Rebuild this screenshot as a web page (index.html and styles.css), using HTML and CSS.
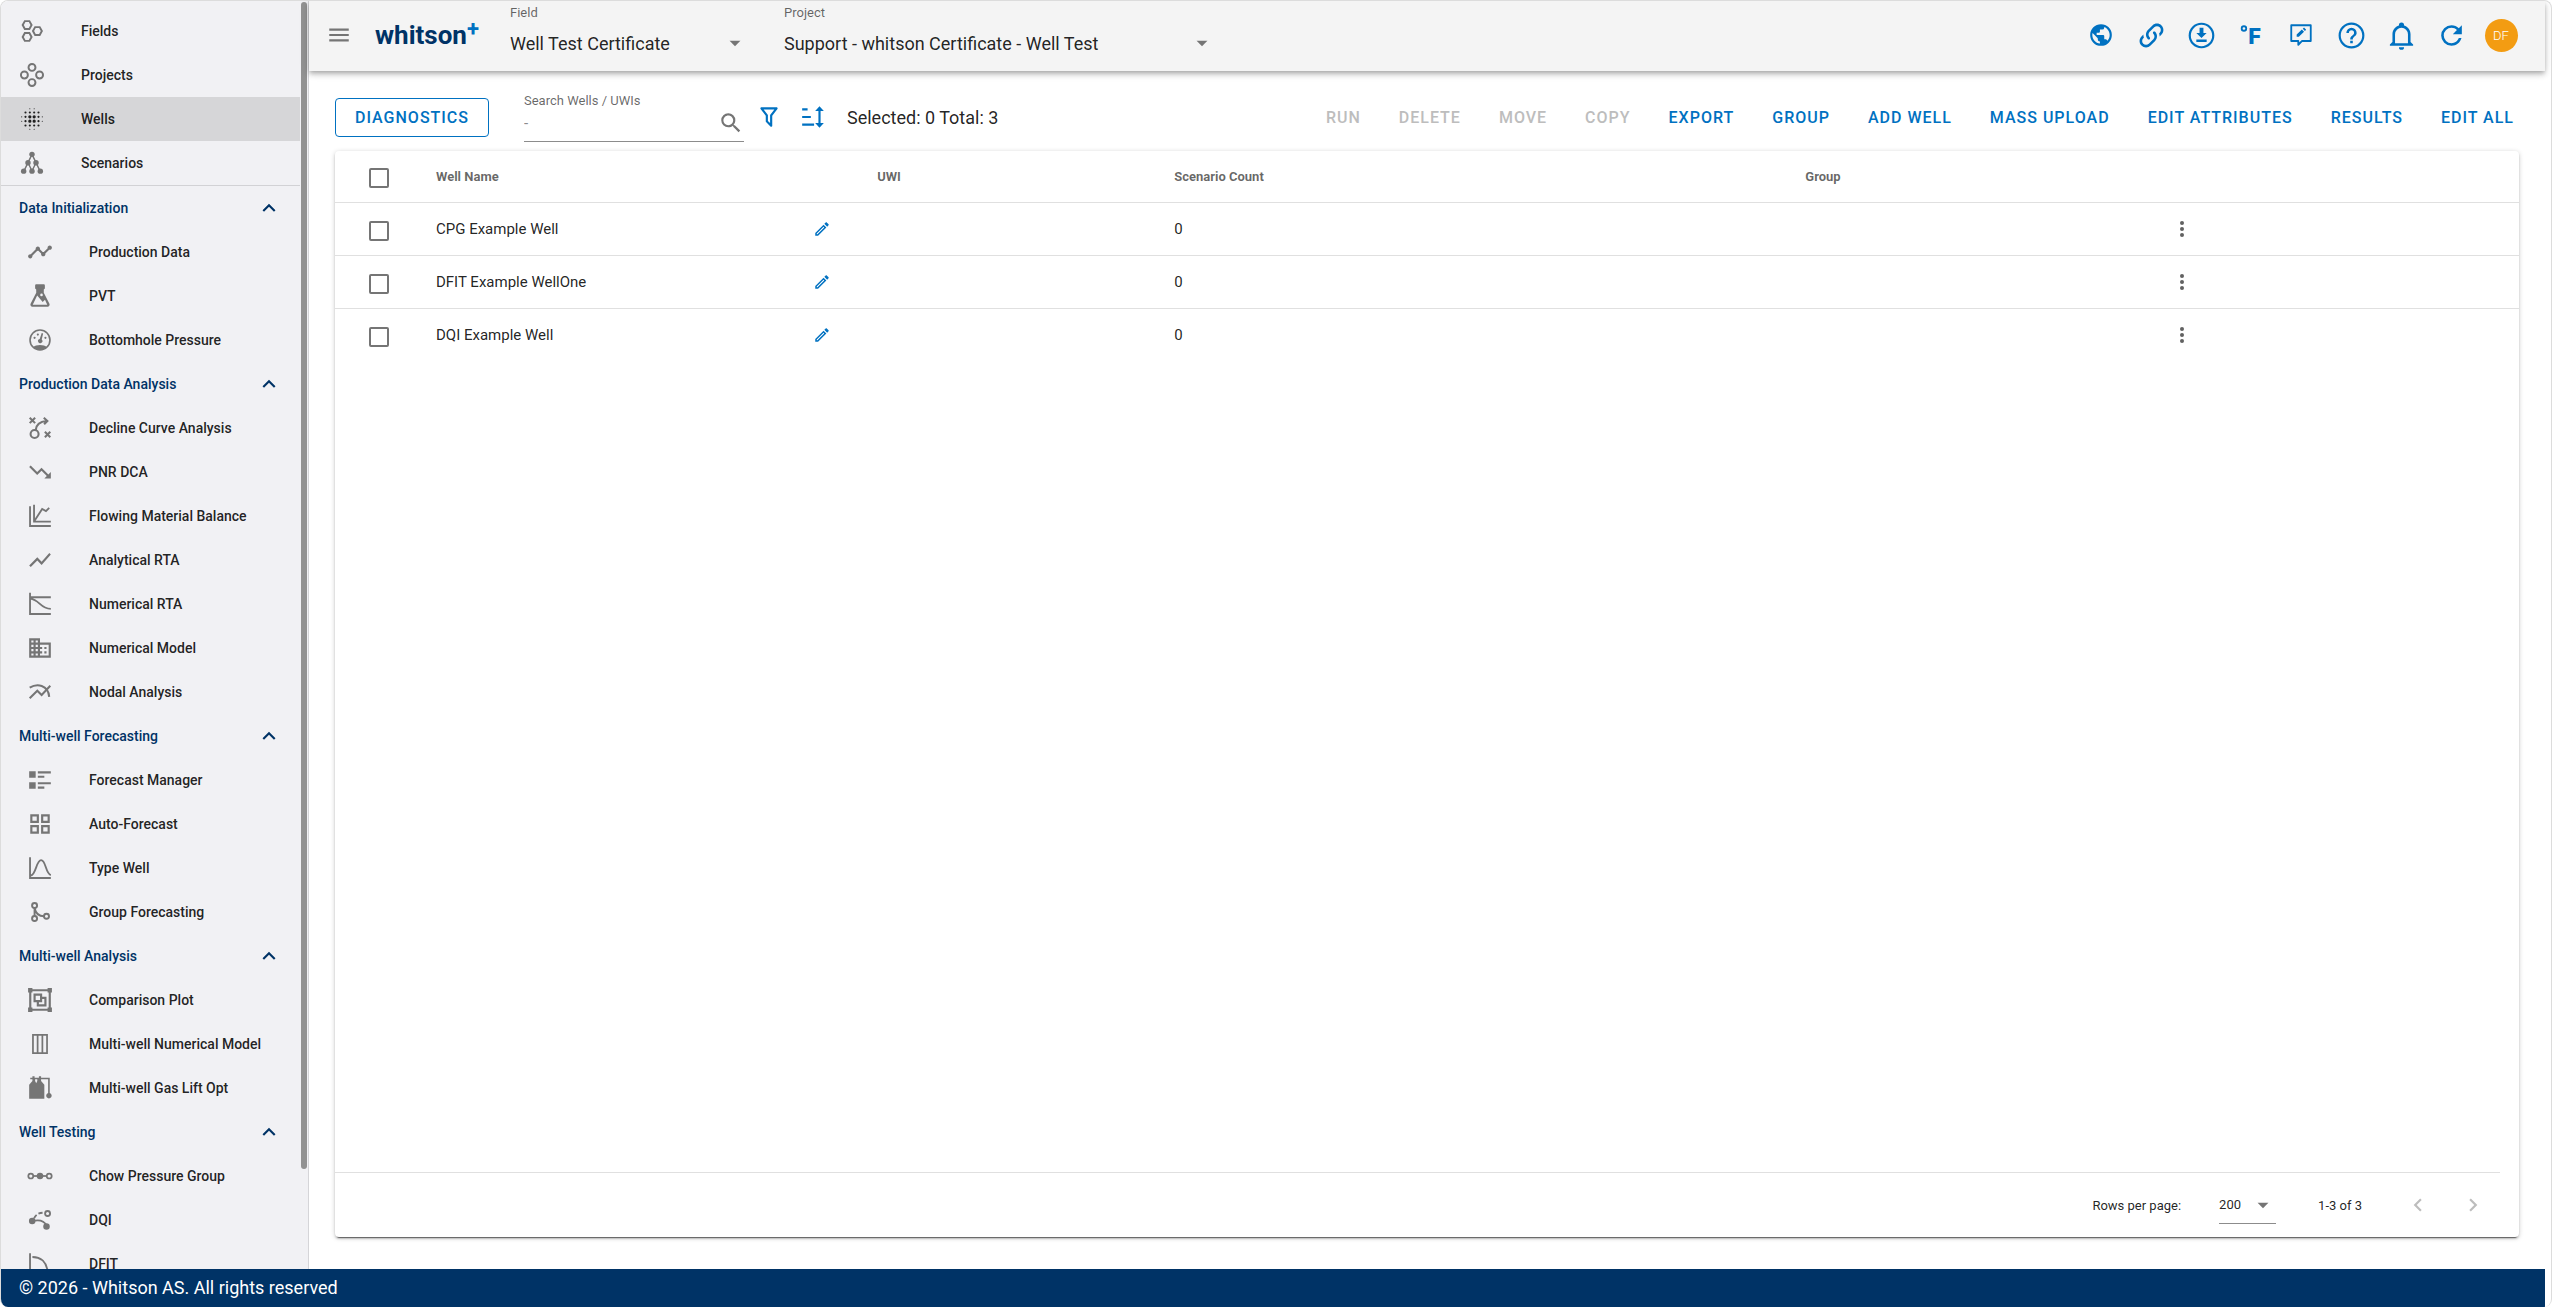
FILE: index.html
```html
<!DOCTYPE html>
<html lang="en">
<head>
  <meta charset="UTF-8" />
  <meta name="viewport" content="width=device-width, initial-scale=1" />
  <title>whitson+ | Wells</title>
  <link rel="stylesheet" href="styles.css">
</head>
<body>
  <!-- icon sprite -->
  <svg class="sprite" aria-hidden="true">
    <symbol id="i-fields" viewBox="0 0 24 24"><g fill="none" stroke="currentColor" stroke-width="1.8"><path d="M5.4 2.9h4.2l2 3.6-2 3.6H5.4l-2-3.6zM5.4 13.9h4.2l2 3.6-2 3.6H5.4l-2-3.6zM14.9 8.4h4.2l2 3.6-2 3.6h-4.2l-2-3.6z"/></g></symbol>
    <symbol id="i-projects" viewBox="0 0 24 24"><g fill="none" stroke="currentColor" stroke-width="1.8"><circle cx="12" cy="5" r="3.2"/><circle cx="5" cy="12" r="3.2"/><circle cx="19" cy="12" r="3.2"/><circle cx="12" cy="19" r="3.2"/></g></symbol>
    <symbol id="i-wells" viewBox="0 0 24 24"><g fill="none" stroke="currentColor" stroke-linecap="round"><path stroke-width="1" d="M10 2.5h0M14 2.5h0M10 21.5h0M14 21.5h0M2.5 10h0M2.5 14h0M21.5 10h0M21.5 14h0"/><path stroke-width="2" d="M6 6h0M10 6h0M14 6h0M18 6h0M6 10h0M18 10h0M6 14h0M18 14h0M6 18h0M10 18h0M14 18h0M18 18h0"/><path stroke-width="3" d="M10 10h0M14 10h0M10 14h0M14 14h0"/></g></symbol>
    <symbol id="i-scenarios" viewBox="0 0 24 24"><path d="M12 4L4.5 19.5M12 4l7.5 15.5M8.5 12l3.5 7.5 3.5-7.5" fill="none" stroke="currentColor" stroke-width="1.3"/><circle cx="12" cy="4" r="2.5"/><circle cx="8.3" cy="11.8" r="2.5"/><circle cx="15.7" cy="11.8" r="2.5"/><circle cx="4.3" cy="19.5" r="2.5"/><circle cx="12" cy="19.5" r="2.5"/><circle cx="19.7" cy="19.5" r="2.5"/></symbol>
    <symbol id="i-timeline" viewBox="0 0 24 24"><path d="M23,8C23,9.1 22.1,10 21,10C20.82,10 20.65,9.97 20.49,9.93L16.93,13.48C16.98,13.64 17,13.82 17,14C17,15.1 16.1,16 15,16C13.9,16 13,15.1 13,14C13,13.82 13.02,13.64 13.07,13.48L10.52,10.93C10.36,10.98 10.18,11 10,11C9.82,11 9.64,10.98 9.48,10.93L4.93,15.49C4.97,15.65 5,15.82 5,16C5,17.1 4.1,18 3,18C1.9,18 1,17.1 1,16C1,14.9 1.9,14 3,14C3.18,14 3.35,14.03 3.51,14.07L8.07,9.52C8.02,9.36 8,9.18 8,9C8,7.9 8.9,7 10,7C11.1,7 12,7.9 12,9C12,9.18 11.98,9.36 11.93,9.52L14.48,12.07C14.64,12.02 14.82,12 15,12C15.18,12 15.36,12.02 15.52,12.07L19.07,8.51C19.03,8.35 19,8.18 19,8C19,6.9 19.9,6 21,6C22.1,6 23,6.9 23,8Z"/></symbol>
    <symbol id="i-pvt" viewBox="0 0 24 24"><path fill-rule="evenodd" d="M8.5 1.2h7a1 1 0 0 1 1 1v2.8l-1 1v3l5.2 10.2A2 2 0 0 1 19 22H5a2 2 0 0 1-1.7-2.8L8.5 9V6l-1-1V2.200a1 1 0 0 1 1-1zM9.400 11.500L5.300 20h13.400L16.600 15.500 14.500 17.500z"/><circle cx="13.400" cy="11" r="1.200" fill="#f1f1f4"/></symbol>
    <symbol id="i-gauge" viewBox="0 0 24 24"><circle cx="12" cy="12" r="9.2" fill="none" stroke="currentColor" stroke-width="1.5"/><path d="M5.5 18.500c3-2.600 10-2.600 13 0C15 22 9 22 5.500 18.500z"/><path d="M13.600 5.500l1.300.5-1.300 5.500a2 2 0 1 1-1.900-.5z"/><circle cx="7" cy="10" r="1"/><circle cx="10" cy="7" r="1"/><circle cx="17" cy="10" r="1"/></symbol>
    <symbol id="i-strategy" viewBox="0 0 24 24"><g fill="none" stroke="currentColor" stroke-width="1.9"><circle cx="7" cy="17.5" r="3.7"/><path d="M2.5 2.500l5 5M7.500 2.500l-5 5M16.500 15.500l5 5M21.500 15.500l-5 5M8 14c.5-5.500 4-8 10-8.500M15.500 2.500l3.300 3-3 3"/></g></symbol>
    <symbol id="i-down" viewBox="0 0 24 24"><path d="M16,18L18.29,15.71L13.41,10.83L9.41,14.83L2,7.41L3.41,6L9.41,12L13.41,8L19.71,14.29L22,12V18H16Z"/></symbol>
    <symbol id="i-fmb" viewBox="0 0 24 24"><g fill="none" stroke="currentColor" stroke-width="1.7"><path d="M2.8 3v18.200H22M6.500 1.500v15.700H22M6.500 17L14 5.500l3.500 2L20.500 4.500"/></g></symbol>
    <symbol id="i-up" viewBox="0 0 24 24"><path d="M3.5,18.5L9.5,12.5L13.5,16.5L22,6.92L20.59,5.5L13.5,13.5L9.5,9.5L2,17L3.5,18.5Z"/></symbol>
    <symbol id="i-nrta" viewBox="0 0 24 24"><g fill="none" stroke="currentColor" stroke-width="1.7"><path d="M2.8 1.500v19.700H22M2.800 5.800H22M2.800 7c9 1 9 9 19.200 9.500"/></g></symbol>
    <symbol id="i-model" viewBox="0 0 24 24"><path d="M18,15H16V17H18M18,11H16V13H18M20,19H12V17H14V15H12V13H14V11H12V9H20M10,7H8V5H10M10,11H8V9H10M10,15H8V13H10M10,19H8V17H10M6,7H4V5H6M6,11H4V9H6M6,15H4V13H6M6,19H4V17H6M12,7V3H2V21H22V7H12Z"/></symbol>
    <symbol id="i-nodal" viewBox="0 0 24 24"><g fill="none" stroke="currentColor" stroke-width="1.9"><path d="M2.5 17.800l7-7 4 4 8-8.500M2.500 8C9 4 19.500 5 20.500 16.500"/></g></symbol>
    <symbol id="i-list" viewBox="0 0 24 24"><path d="M2 14H8V20H2M16 8H10V10H16M2 10H8V4H2M10 4V6H22V4M10 20H16V18H10M10 16H22V14H10"/></symbol>
    <symbol id="i-grid" viewBox="0 0 24 24"><path d="M3 11H11V3H3M5 5H9V9H5M13 21H21V13H13M15 15H19V19H15M3 21H11V13H3M5 15H9V19H5M13 3V11H21V3M19 9H15V5H19Z"/></symbol>
    <symbol id="i-bell-curve" viewBox="0 0 24 24"><g fill="none" stroke="currentColor" stroke-width="1.7"><path d="M2.8 2v19.200H22M3.500 19c5-1 5-14.300 9.500-14.300S17 17 22 18.500"/></g></symbol>
    <symbol id="i-branch" viewBox="0 0 24 24"><g fill="none" stroke="currentColor" stroke-width="1.8"><circle cx="7" cy="6" r="2.3"/><circle cx="7" cy="18" r="2.3"/><circle cx="18" cy="16" r="2.3"/><path d="M7 8.300v7.400M7 8.300c1 5 4 7.700 8.700 7.700"/></g></symbol>
    <symbol id="i-group" viewBox="0 0 24 24"><path fill-rule="evenodd" d="M1,1V5H2V19H1V23H5V22H19V23H23V19H22V5H23V1H19V2H5V1ZM5,4H19V5H20V19H19V20H5V19H4V5H5ZM6,6V14H9V18H18V9H14V6ZM8,8H12V12H8ZM14,11H16V16H11V14H14Z"/></symbol>
    <symbol id="i-columns" viewBox="0 0 24 24"><g fill="none" stroke="currentColor" stroke-width="1.6"><path d="M5.5 3.500h13v17h-13zM9.800 3.500v17M14.200 3.500v17"/></g></symbol>
    <symbol id="i-gas" viewBox="0 0 24 24"><path d="M2 22V9l3-3.500V4H3V2.500h2V1.200h2v1.300h4V1.200h2v1.300h8v14.200a2.500 2.500 0 1 1-1.500 0V4H13v1.500L16 9v13zM8.500 7.500l1-2V4h-2v1.500z"/></symbol>
    <symbol id="i-chow" viewBox="0 0 24 24"><g fill="none" stroke="currentColor" stroke-width="1.6"><circle cx="3.5" cy="12" r="2.3"/><circle cx="20.5" cy="12" r="2.3"/><path d="M6 12h12"/></g><circle cx="12" cy="12" r="3"/></symbol>
    <symbol id="i-dqi" viewBox="0 0 24 24"><circle cx="4.8" cy="13" r="3"/><circle cx="18" cy="18" r="3"/><g fill="none" stroke="currentColor" stroke-width="1.7"><circle cx="19" cy="6" r="2.3"/><path d="M5 13c6-1.500 11 0 13 4"/><path stroke-dasharray="4 2" d="M6.500 10.500C8 7 11 5 16.500 5.300"/></g></symbol>
    <symbol id="i-dfit" viewBox="0 0 24 24"><g fill="none" stroke="currentColor" stroke-width="1.7"><path d="M2.8 2v19.200H22M5 5.500c8 0 13 5 14 13"/></g></symbol>
    <symbol id="i-chevron-up" viewBox="0 0 24 24"><path d="M7.41,15.41L12,10.83L16.59,15.41L18,14L12,8L6,14L7.41,15.41Z"/></symbol>
    <symbol id="i-chevron-left" viewBox="0 0 24 24"><path d="M15.41,16.59L10.83,12L15.41,7.41L14,6L8,12L14,18L15.41,16.59Z"/></symbol>
    <symbol id="i-chevron-right" viewBox="0 0 24 24"><path d="M8.59,16.59L13.17,12L8.59,7.41L10,6L16,12L10,18L8.59,16.59Z"/></symbol>
    <symbol id="i-caret" viewBox="0 0 24 24"><path d="M7,10L12,15L17,10H7Z"/></symbol>
    <symbol id="i-menu" viewBox="0 0 24 24"><path d="M3,6H21V8H3V6M3,11H21V13H3V11M3,16H21V18H3V16Z"/></symbol>
    <symbol id="i-earth" viewBox="0 0 24 24"><path d="M17.9,17.39C17.64,16.59 16.89,16 16,16H15V13A1,1 0 0,0 14,12H8V10H10A1,1 0 0,0 11,9V7H13A2,2 0 0,0 15,5V4.59C17.93,5.77 20,8.64 20,12C20,14.08 19.2,15.97 17.9,17.39M11,19.93C7.05,19.44 4,16.08 4,12C4,11.38 4.08,10.78 4.21,10.21L9,15V16A2,2 0 0,0 11,18M12,2A10,10 0 0,0 2,12A10,10 0 0,0 12,22A10,10 0 0,0 22,12A10,10 0 0,0 12,2Z"/></symbol>
    <symbol id="i-link" viewBox="0 0 24 24"><path d="M10.59,13.41C11,13.8 11,14.44 10.59,14.83C10.2,15.22 9.56,15.22 9.17,14.83C7.22,12.88 7.22,9.71 9.17,7.76V7.76L12.71,4.22C14.66,2.27 17.83,2.27 19.78,4.22C21.73,6.17 21.73,9.34 19.78,11.29L18.29,12.78C18.3,11.96 18.17,11.14 17.89,10.36L18.36,9.88C19.54,8.71 19.54,6.81 18.36,5.64C17.19,4.46 15.29,4.46 14.12,5.64L10.59,9.17C9.41,10.34 9.41,12.24 10.59,13.41M13.41,9.17C13.8,8.78 14.44,8.78 14.83,9.17C16.78,11.12 16.78,14.29 14.83,16.24V16.24L11.29,19.78C9.34,21.73 6.17,21.73 4.22,19.78C2.27,17.83 2.27,14.66 4.22,12.71L5.71,11.22C5.7,12.04 5.83,12.86 6.11,13.65L5.64,14.12C4.46,15.29 4.46,17.19 5.64,18.36C6.81,19.54 8.71,19.54 9.88,18.36L13.41,14.83C14.59,13.66 14.59,11.76 13.41,10.59C13,10.2 13,9.56 13.41,9.17Z"/></symbol>
    <symbol id="i-download" viewBox="0 0 24 24"><circle cx="12" cy="12" r="9.1" fill="none" stroke="currentColor" stroke-width="1.7"/><path d="M8 15h8v2H8zM16 10l-4 4-4-4h2.500V6h3v4z"/></symbol>
    <symbol id="i-fahrenheit" viewBox="0 0 24 24"><circle cx="5.5" cy="6" r="2.1" fill="none" stroke="currentColor" stroke-width="1.7"/><text x="9.5" y="20" font-size="21" font-weight="900">F</text></symbol>
    <symbol id="i-comment" viewBox="0 0 24 24"><path d="M3 3h18v14.500h-8L9.500 21v-3.500H3z" fill="none" stroke="currentColor" stroke-width="1.7" stroke-linejoin="round"/><path d="M8 13.500v-2l4.800-4.600 2 2L10 13.500zM13.600 6.200l1.200-1.100 2 2-1.200 1.100z"/></symbol>
    <symbol id="i-help" viewBox="0 0 24 24"><path d="M11,18H13V16H11V18M12,2A10,10 0 0,0 2,12A10,10 0 0,0 12,22A10,10 0 0,0 22,12A10,10 0 0,0 12,2M12,20.3C7.4,20.3 3.7,16.6 3.7,12C3.7,7.4 7.4,3.7 12,3.7C16.6,3.7 20.3,7.4 20.3,12C20.3,16.6 16.6,20.3 12,20.3M12,6A4,4 0 0,0 8,10H10A2,2 0 0,1 12,8A2,2 0 0,1 14,10C14,12 11,11.75 11,15H13C13,12.75 16,12.5 16,10A4,4 0 0,0 12,6Z"/></symbol>
    <symbol id="i-bell" viewBox="0 0 24 24"><path d="M10,21H14A2,2 0 0,1 12,23A2,2 0 0,1 10,21M21,19V20H3V19L5,17V11C5,7.9 7.03,5.17 10,4.29C10,4.19 10,4.1 10,4A2,2 0 0,1 12,2A2,2 0 0,1 14,4C14,4.1 14,4.19 14,4.29C16.97,5.17 19,7.9 19,11V17L21,19M17,11A5,5 0 0,0 12,6A5,5 0 0,0 7,11V18H17V11Z"/></symbol>
    <symbol id="i-refresh" viewBox="0 0 24 24"><path d="M17.65,6.35C16.2,4.9 14.21,4 12,4A8,8 0 0,0 4,12A8,8 0 0,0 12,20C15.73,20 18.84,17.45 19.73,14H17.65C16.83,16.33 14.61,18 12,18A6,6 0 0,1 6,12A6,6 0 0,1 12,6C13.66,6 15.14,6.69 16.22,7.78L13,11H20V4L17.65,6.35Z"/></symbol>
    <symbol id="i-search" viewBox="0 0 24 24"><path d="M9.5,3A6.5,6.5 0 0,1 16,9.5C16,11.11 15.41,12.59 14.44,13.73L14.71,14H15.5L20.5,19L19,20.5L14,15.5V14.71L13.73,14.44C12.59,15.41 11.11,16 9.5,16A6.5,6.5 0 0,1 3,9.5A6.5,6.5 0 0,1 9.5,3M9.5,5C7,5 5,7 5,9.5C5,12 7,14 9.5,14C12,14 14,12 14,9.5C14,7 12,5 9.5,5Z"/></symbol>
    <symbol id="i-filter" viewBox="0 0 24 24"><path d="M15,19.88C15.04,20.18 14.94,20.5 14.71,20.71C14.32,21.1 13.69,21.1 13.3,20.71L9.29,16.7C9.06,16.47 8.96,16.16 9,15.87V10.75L4.21,4.62C3.87,4.19 3.95,3.56 4.38,3.22C4.57,3.08 4.78,3 5,3H19C19.22,3 19.43,3.08 19.62,3.22C20.05,3.56 20.13,4.19 19.79,4.62L15,10.75V19.88M7.04,5L11,10.06V15.58L13,17.58V10.05L16.96,5H7.04Z"/></symbol>
    <symbol id="i-sort" viewBox="0 0 24 24"><path d="M2 4h5v2H2zM2 11h8v2H2zM2 18h11v2H2zM18 2l4 4.500h-3v11h3L18 22l-4-4.500h3v-11h-3z"/></symbol>
    <symbol id="i-pencil" viewBox="0 0 24 24"><path d="M14.06,9L15,9.94L5.92,19H5V18.08L14.06,9M17.66,3C17.41,3 17.15,3.1 16.96,3.29L15.13,5.12L18.88,8.87L20.71,7.04C21.1,6.65 21.1,6 20.71,5.63L18.37,3.29C18.17,3.09 17.92,3 17.66,3M14.06,6.19L3,17.25V21H6.75L17.81,9.94L14.06,6.19Z"/></symbol>
    <symbol id="i-dots" viewBox="0 0 24 24"><circle cx="12" cy="6" r="2"/><circle cx="12" cy="12" r="2"/><circle cx="12" cy="18" r="2"/></symbol>
  </svg>

  <div class="app">
    <aside class="sidebar">
      <nav class="nav">
        <a href="#"><svg><use href="#i-fields"/></svg>Fields</a>
        <a href="#"><svg><use href="#i-projects"/></svg>Projects</a>
        <a href="#" class="active"><svg><use href="#i-wells"/></svg>Wells</a>
        <a href="#"><svg><use href="#i-scenarios"/></svg>Scenarios</a>
        <hr>
        <button class="nav-group">Data Initialization<svg><use href="#i-chevron-up"/></svg></button>
        <a href="#" class="sub"><svg><use href="#i-timeline"/></svg>Production Data</a>
        <a href="#" class="sub"><svg><use href="#i-pvt"/></svg>PVT</a>
        <a href="#" class="sub"><svg><use href="#i-gauge"/></svg>Bottomhole Pressure</a>
        <button class="nav-group">Production Data Analysis<svg><use href="#i-chevron-up"/></svg></button>
        <a href="#" class="sub"><svg><use href="#i-strategy"/></svg>Decline Curve Analysis</a>
        <a href="#" class="sub"><svg><use href="#i-down"/></svg>PNR DCA</a>
        <a href="#" class="sub"><svg><use href="#i-fmb"/></svg>Flowing Material Balance</a>
        <a href="#" class="sub"><svg><use href="#i-up"/></svg>Analytical RTA</a>
        <a href="#" class="sub"><svg><use href="#i-nrta"/></svg>Numerical RTA</a>
        <a href="#" class="sub"><svg><use href="#i-model"/></svg>Numerical Model</a>
        <a href="#" class="sub"><svg><use href="#i-nodal"/></svg>Nodal Analysis</a>
        <button class="nav-group">Multi-well Forecasting<svg><use href="#i-chevron-up"/></svg></button>
        <a href="#" class="sub"><svg><use href="#i-list"/></svg>Forecast Manager</a>
        <a href="#" class="sub"><svg><use href="#i-grid"/></svg>Auto-Forecast</a>
        <a href="#" class="sub"><svg><use href="#i-bell-curve"/></svg>Type Well</a>
        <a href="#" class="sub"><svg><use href="#i-branch"/></svg>Group Forecasting</a>
        <button class="nav-group">Multi-well Analysis<svg><use href="#i-chevron-up"/></svg></button>
        <a href="#" class="sub"><svg><use href="#i-group"/></svg>Comparison Plot</a>
        <a href="#" class="sub"><svg><use href="#i-columns"/></svg>Multi-well Numerical Model</a>
        <a href="#" class="sub"><svg><use href="#i-gas"/></svg>Multi-well Gas Lift Opt</a>
        <button class="nav-group">Well Testing<svg><use href="#i-chevron-up"/></svg></button>
        <a href="#" class="sub"><svg><use href="#i-chow"/></svg>Chow Pressure Group</a>
        <a href="#" class="sub"><svg><use href="#i-dqi"/></svg>DQI</a>
        <a href="#" class="sub"><svg><use href="#i-dfit"/></svg>DFIT</a>
      </nav>
      <div class="scrollbar"></div>
    </aside>

    <div class="content">
      <header class="topbar">
        <button class="menu-btn" aria-label="Menu"><svg><use href="#i-menu"/></svg></button>
        <a href="#" class="logo">whitson<span>+</span></a>
        <div class="field field-select">
          <label for="field">Field</label>
          <div class="select">
            <select id="field"><option>Well Test Certificate</option></select>
            <svg><use href="#i-caret"/></svg>
          </div>
        </div>
        <div class="field project-select">
          <label for="project">Project</label>
          <div class="select">
            <select id="project"><option>Support - whitson Certificate - Well Test</option></select>
            <svg><use href="#i-caret"/></svg>
          </div>
        </div>
        <div class="actions">
          <button aria-label="Language"><svg><use href="#i-earth"/></svg></button>
          <button aria-label="Copy link"><svg class="lg"><use href="#i-link"/></svg></button>
          <button aria-label="Downloads"><svg class="lg"><use href="#i-download"/></svg></button>
          <button aria-label="Units"><svg><use href="#i-fahrenheit"/></svg></button>
          <button aria-label="Feedback"><svg><use href="#i-comment"/></svg></button>
          <button aria-label="Help"><svg class="lg"><use href="#i-help"/></svg></button>
          <button aria-label="Notifications"><svg class="lg"><use href="#i-bell"/></svg></button>
          <button aria-label="Refresh"><svg class="lg"><use href="#i-refresh"/></svg></button>
          <button aria-label="Account"><span class="avatar">DF</span></button>
        </div>
      </header>

      <main>
        <div class="toolbar">
          <button class="btn outlined">Diagnostics</button>
          <div class="search">
            <label for="search">Search Wells / UWIs</label>
            <div class="search-row">
              <input type="text" id="search" placeholder="-">
              <svg><use href="#i-search"/></svg>
            </div>
          </div>
          <button class="tool" aria-label="Filter"><svg><use href="#i-filter"/></svg></button>
          <button class="tool" aria-label="Sort"><svg><use href="#i-sort"/></svg></button>
          <span class="count">Selected: 0 Total: 3</span>
          <div class="commands">
            <button class="btn" disabled>Run</button>
            <button class="btn" disabled>Delete</button>
            <button class="btn" disabled>Move</button>
            <button class="btn" disabled>Copy</button>
            <button class="btn">Export</button>
            <button class="btn">Group</button>
            <button class="btn">Add Well</button>
            <button class="btn">Mass Upload</button>
            <button class="btn">Edit Attributes</button>
            <button class="btn">Results</button>
            <button class="btn">Edit All</button>
          </div>
        </div>

        <section class="card">
          <table>
            <colgroup>
              <col class="c-check"><col class="c-name"><col class="c-uwi"><col class="c-count"><col class="c-group"><col>
            </colgroup>
            <thead>
              <tr>
                <th><input type="checkbox" aria-label="Select all"></th>
                <th>Well Name</th>
                <th>UWI</th>
                <th>Scenario Count</th>
                <th>Group</th>
                <th></th>
              </tr>
            </thead>
            <tbody>
              <tr>
                <td><input type="checkbox" aria-label="Select CPG Example Well"></td>
                <td><div class="name">CPG Example Well<button aria-label="Rename"><svg><use href="#i-pencil"/></svg></button></div></td>
                <td></td>
                <td>0</td>
                <td></td>
                <td><button class="more" aria-label="More"><svg><use href="#i-dots"/></svg></button></td>
              </tr>
              <tr>
                <td><input type="checkbox" aria-label="Select DFIT Example WellOne"></td>
                <td><div class="name">DFIT Example WellOne<button aria-label="Rename"><svg><use href="#i-pencil"/></svg></button></div></td>
                <td></td>
                <td>0</td>
                <td></td>
                <td><button class="more" aria-label="More"><svg><use href="#i-dots"/></svg></button></td>
              </tr>
              <tr>
                <td><input type="checkbox" aria-label="Select DQI Example Well"></td>
                <td><div class="name">DQI Example Well<button aria-label="Rename"><svg><use href="#i-pencil"/></svg></button></div></td>
                <td></td>
                <td>0</td>
                <td></td>
                <td><button class="more" aria-label="More"><svg><use href="#i-dots"/></svg></button></td>
              </tr>
            </tbody>
          </table>

          <div class="pagination">
            <label for="rows">Rows per page:</label>
            <div class="select rows">
              <select id="rows"><option>200</option></select>
              <svg><use href="#i-caret"/></svg>
            </div>
            <span class="range">1-3 of 3</span>
            <button disabled aria-label="Previous page"><svg><use href="#i-chevron-left"/></svg></button>
            <button disabled aria-label="Next page"><svg><use href="#i-chevron-right"/></svg></button>
          </div>
        </section>
      </main>
    </div>
  </div>

  <footer>© 2026 - Whitson AS. All rights reserved</footer>
</body>
</html>
```
FILE: styles.css
```css
* {
  box-sizing: border-box;
}

html {
  background: #fff;
}

body {
  margin: 0;
  height: 100vh;
  padding-right: 6px;
  border: 1px solid #dcdcdc;
  border-bottom: none;
  border-radius: 8px;
  overflow: hidden;
  display: flex;
  flex-direction: column;
  font-family: Roboto, "Liberation Sans", sans-serif;
  color: rgba(0, 0, 0, 0.87);
}

.sprite {
  display: none;
}

svg {
  width: 26px;
  height: 26px;
  fill: currentColor;
  flex: none;
}

button,
input,
select {
  font-family: inherit;
  margin: 0;
}

button {
  border: none;
  background: none;
  padding: 0;
  cursor: pointer;
}

a {
  color: inherit;
  text-decoration: none;
}

.app {
  flex: 1;
  min-height: 0;
  display: flex;
}

/* Sidebar */
.sidebar {
  width: 308px;
  flex: none;
  display: flex;
  background: #f1f1f4;
  border-right: 1px solid #d5d5d8;
}

.nav {
  flex: 1;
  padding-top: 8px;
  overflow: hidden;
}

.nav a,
.nav-group {
  display: flex;
  align-items: center;
  width: 100%;
  height: 44px;
  padding: 0 18px;
  font-size: 14px;
  font-weight: 500;
}

.nav a {
  gap: 36px;
}

.nav a svg {
  color: #757575;
}

.nav a.sub {
  padding-left: 26px;
}

.nav a.active {
  background: #d6d6d8;
}

.nav a.active svg {
  color: #212121;
}

.nav hr {
  margin: 0;
  border: none;
  border-top: 1px solid #d2d2d5;
}

.nav-group {
  justify-content: space-between;
  color: #003366;
}

.scrollbar {
  width: 6px;
  height: 92%;
  margin: 1px 1px 0;
  border-radius: 3px;
  background: #929292;
}

/* Top bar */
.content {
  flex: 1;
  min-width: 0;
  display: flex;
  flex-direction: column;
}

.topbar {
  height: 70px;
  flex: none;
  display: flex;
  align-items: center;
  padding: 0 19px 2px 17px;
  background: #f4f4f4;
  box-shadow: 0 2px 4px -1px rgba(0,0,0,0.2), 0 4px 5px rgba(0,0,0,0.14), 0 1px 10px rgba(0,0,0,0.12);
}

.menu-btn {
  display: flex;
  color: #757575;
}

.logo {
  display: flex;
  width: 135px;
  margin-left: 23px;
  font-size: 26px;
  font-weight: 700;
  line-height: 32px;
  color: #003366;
}

.logo span {
  font-size: 22px;
  line-height: 20px;
  color: #0071c1;
}

.field label {
  display: block;
  font-size: 13px;
  line-height: 16px;
  color: rgba(0, 0, 0, 0.6);
}

.field-select {
  width: 238px;
  margin-right: 36px;
}

.project-select {
  width: 431px;
}

/* the caret shares the select's grid cell */
.select {
  display: grid;
  align-items: center;
}

.select select,
.select svg {
  grid-area: 1 / 1;
}

.select svg {
  justify-self: end;
  pointer-events: none;
  color: #757575;
}

select {
  width: 100%;
  height: 44px;
  padding: 0;
  border: none;
  border-radius: 0;
  background: none;
  appearance: none;
  font-size: 18px;
  color: inherit;
}

.actions {
  display: flex;
  margin-left: auto;
  color: #0071c1;
}

.actions button {
  width: 50px;
  height: 50px;
  display: flex;
  align-items: center;
  justify-content: center;
  color: inherit;
}

.actions .lg {
  width: 31px;
  height: 31px;
}

.avatar {
  width: 33px;
  height: 33px;
  border-radius: 50%;
  background: #f39c12;
  color: #fff;
  font-size: 13px;
  font-weight: 300;
  line-height: 33px;
}

/* Main area */
main {
  flex: 1;
  display: flex;
  flex-direction: column;
  padding: 0 26px 32px;
}

.toolbar {
  height: 80px;
  flex: none;
  display: flex;
  align-items: center;
  padding-top: 12px;
}

.btn {
  font-size: 16px;
  font-weight: 500;
  letter-spacing: 1px;
  text-transform: uppercase;
  color: #0071c1;
}

.btn:disabled {
  color: #bdbdbd;
  cursor: default;
}

.btn.outlined {
  height: 39px;
  padding: 0 19px;
  border: 1px solid #0071c1;
  border-radius: 4px;
}

.search {
  width: 220px;
  height: 49px;
  margin-left: 35px;
  border-bottom: 1px solid #8c8c8c;
}

.search label {
  display: block;
  font-size: 13px;
  line-height: 16px;
  color: rgba(0, 0, 0, 0.6);
}

.search-row {
  display: flex;
  align-items: center;
  color: #757575;
}

.search input {
  flex: 1;
  min-width: 0;
  height: 28px;
  padding: 0;
  border: none;
  outline: none;
  background: none;
  font-size: 15px;
}

.search input::placeholder {
  color: #8c8c8c;
}

.tool {
  display: flex;
  margin-left: 12px;
  color: #0071c1;
}

.tool + .tool {
  margin-left: 18px;
}

.count {
  margin-left: 21px;
  font-size: 18px;
}

.commands {
  display: flex;
  gap: 38px;
  margin-left: auto;
  margin-right: 5px;
}

.card {
  flex: 1;
  display: flex;
  flex-direction: column;
  justify-content: space-between;
  border-radius: 4px;
  background: #fff;
  box-shadow: 0 3px 1px -2px rgba(0,0,0,0.5), 0 2px 2px rgba(0,0,0,0.14), 0 1px 5px rgba(0,0,0,0.2);
}

/* Wells table */
table {
  width: 100%;
  table-layout: fixed;
  border-collapse: collapse;
}

.c-check { width: 3.8%; }
.c-name { width: 20.2%; }
.c-uwi { width: 13.6%; }
.c-count { width: 28.9%; }
.c-group { width: 16.7%; }

th,
td {
  height: 53px;
  padding: 0 18px;
  text-align: left;
  font-size: 15px;
}

th {
  height: 51px;
  font-size: 13px;
  font-weight: 700;
  color: rgba(0, 0, 0, 0.6);
}

th,
tr:not(:last-child) td {
  border-bottom: 1px solid #e0e0e0;
}

input[type="checkbox"] {
  display: block;
  width: 20px;
  height: 20px;
  margin: 4px 0 0 16px;
  appearance: none;
  border: 2px solid #757575;
  border-radius: 2px;
}

.name {
  display: flex;
  align-items: center;
  justify-content: space-between;
  padding-right: 10px;
}

.name button {
  display: flex;
  color: #0071c1;
}

.name svg {
  width: 18px;
  height: 18px;
}

.more {
  display: flex;
  color: #616161;
}

.more svg {
  width: 24px;
  height: 24px;
}

.pagination {
  display: flex;
  align-items: center;
  justify-content: flex-end;
  height: 65px;
  margin-right: 19px;
  border-top: 1px solid #e0e0e0;
  font-size: 13px;
}

.rows {
  width: 57px;
  margin: 0 42px 0 38px;
  border-bottom: 1px solid #8c8c8c;
}

.rows select {
  height: 36px;
  font-size: 13px;
}

.range {
  margin-right: 28px;
}

.pagination button {
  display: flex;
  justify-content: center;
  width: 55px;
  color: #bdbdbd;
}

footer {
  height: 38px;
  flex: none;
  padding-left: 18px;
  background: #003366;
  color: #fff;
  font-size: 18px;
  line-height: 38px;
}
```
